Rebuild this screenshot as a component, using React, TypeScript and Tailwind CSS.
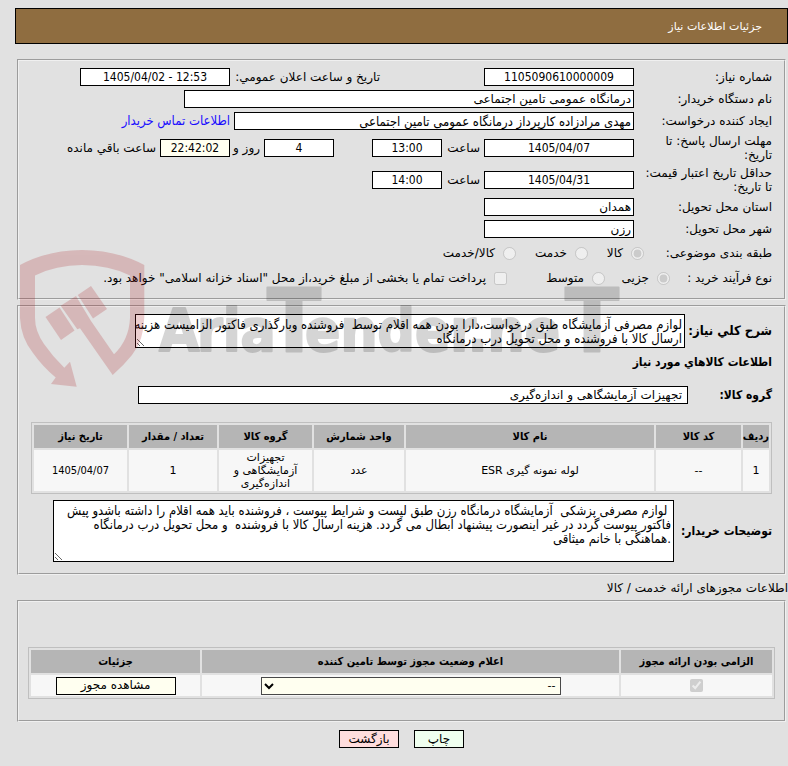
import React from 'react'
import { clsx } from 'clsx'

const items = [
    { row: '1', code: '--', name: 'لوله نمونه گیری ESR', unit: 'عدد', group: 'تجهیزات آزمایشگاهی و اندازه‌گیری', qty: '1', date: '1405/04/07' },
]

const summary = `لوازم مصرفی آزمایشگاه طبق درخواست،دارا بودن همه اقلام توسط  فروشنده وبارگذاری فاکتور الزامیست هزینه
ارسال کالا با فروشنده و محل تحویل درب درمانگاه`

const notes = ` لوازم مصرفی پزشکی  آزمایشگاه درمانگاه رزن طبق لیست و شرایط پیوست ، فروشنده باید همه اقلام را داشته باشدو پیش
فاکتور پیوست گردد در غیر اینصورت پیشنهاد ابطال می گردد. هزینه ارسال کالا با فروشنده  و محل تحویل درب درمانگاه
.هماهنگی با خانم میثاقی`

const panel = 'mx-[2px] border-2 border-[#f0f0f0] [border-style:groove]'
const condensed = 'font-["DejaVu_Sans_Condensed",sans-serif]'
const th = 'h-[23px] bg-[#b5b5b5] p-0 font-["DejaVu_Sans_Condensed",sans-serif] text-[11px] font-bold whitespace-nowrap'
const td = 'bg-[#f7f7f7] p-0 text-center'

function Field({ id, value, className }: { id: string; value: string; className?: string }) {
    return (
        <input
            id={id}
            readOnly
            defaultValue={value}
            className={clsx('h-[18px] min-w-0 border border-black px-[2px]', className)}
        />
    )
}

function NumberField({ id, value, label, className }: { id: string; value: string; label?: string; className?: string }) {
    return (
        <input
            id={id}
            dir="ltr"
            aria-label={label}
            readOnly
            defaultValue={value}
            className={clsx('h-[18px] min-w-0 border border-black text-center', condensed, className)}
        />
    )
}

function Label({ htmlFor, children, className }: { htmlFor: string; children: React.ReactNode; className?: string }) {
    return <label htmlFor={htmlFor} className={clsx('shrink-0', className)}>{children}</label>
}

function Watermark() {
    return (
        <svg className="pointer-events-none absolute top-[248px] left-[18px]" width="610" height="142" viewBox="18 248 610 142" aria-hidden="true">
            <g fill="#aa1419" opacity="0.2">
                <path d="M20 265Q48 250 82 250Q116 250 144.300 265V317Q144 340 132 355Q124 365 112.700 375L80 328.300L77.300 329.300L60.700 305.700L76 296L91 321L114 354.300Q129 340 130 318V275.500Q109 265 82 265Q56 265 35 275.500V318Q35 331 44 344Q53 357 64.300 367.700L70 361.700L76.700 386.700L51 384L55.700 377.500Q43 367 33 353Q21 338 20 318Z" />
                <path d="M45.500 317L59.500 307.500L74.500 330.500L61 340Z" />
                <path d="M77.800 295L91 286L107 309L93 318.500Z" />
            </g>
            <g opacity="0.16" direction="ltr" fontWeight="700" stroke="black" strokeWidth="2" strokeLinejoin="round" className='font-["DejaVu_Sans_Condensed",sans-serif]'>
                <text y="351" fontSize="58">
                    <tspan x="159">A</tspan>
                    <tspan x="197">ria</tspan>
                    <tspan x="267" fontSize="88">T</tspan>
                    <tspan x="305">ender.ne</tspan>
                    <tspan x="565" fontSize="88">T</tspan>
                </text>
            </g>
        </svg>
    )
}

function RequestInfo() {
    return (
        <section className={clsx(panel, 'mt-[15px] h-[241px] px-[12px] pt-[5px] whitespace-nowrap')}>
            <div className="flex h-[22px] items-center gap-1">
                <Label htmlFor="number" className="w-[134px]">شماره نیاز:</Label>
                <NumberField id="number" value="1105090610000009" className="w-[150px] bg-white" />
                <Label htmlFor="announced" className="mr-[100px] w-[146px]">تاریخ و ساعت اعلان عمومي:</Label>
                <NumberField id="announced" value="1405/04/02 - 12:53" className="w-[150px] bg-white" />
            </div>
            <div className="flex h-[22px] items-center gap-1">
                <Label htmlFor="org" className="w-[134px]">نام دستگاه خریدار:</Label>
                <Field id="org" value="درمانگاه عمومی تامین اجتماعی" className="w-[450px] bg-white" />
            </div>
            <div className="flex h-[22px] items-center gap-1">
                <Label htmlFor="creator" className="w-[134px]">ایجاد کننده درخواست:</Label>
                <Field id="creator" value="مهدی مرادزاده کارپرداز درمانگاه عمومی تامین اجتماعی" className={clsx('w-[400px] bg-white text-[13px]', condensed)} />
                <a href="#" className={clsx('text-[13px] text-[#1a0dff]', condensed)}>اطلاعات تماس خریدار</a>
            </div>
            <div className="flex h-[32px] items-center gap-1">
                <Label htmlFor="deadline" className="w-[134px]">مهلت ارسال پاسخ: تا<br />تاریخ:</Label>
                <NumberField id="deadline" value="1405/04/07" className="w-[150px] bg-white" />
                <Label htmlFor="deadline-hour" className="w-[34px]">ساعت</Label>
                <NumberField id="deadline-hour" value="13:00" className="w-[70px] bg-white" />
                <NumberField id="days" value="4" className="mr-[34px] w-[70px] bg-white" />
                <Label htmlFor="days" className="w-[26px]">روز و</Label>
                <NumberField id="remaining" value="22:42:02" className="w-[70px] bg-[#fffff0]" />
                <Label htmlFor="remaining">ساعت باقي مانده</Label>
            </div>
            <div className="flex h-[32px] items-center gap-1">
                <Label htmlFor="valid" className="w-[134px]">حداقل تاریخ اعتبار قیمت:<br />تا تاریخ:</Label>
                <NumberField id="valid" value="1405/04/31" className="w-[150px] bg-white" />
                <Label htmlFor="valid-hour" className="w-[34px]">ساعت</Label>
                <NumberField id="valid-hour" value="14:00" className="w-[70px] bg-white" />
            </div>
            <div className="flex h-[22px] items-center gap-1">
                <Label htmlFor="province" className="w-[134px]">استان محل تحویل:</Label>
                <Field id="province" value="همدان" className="w-[150px] bg-white" />
            </div>
            <div className="flex h-[22px] items-center gap-1">
                <Label htmlFor="city" className="w-[134px]">شهر محل تحویل:</Label>
                <Field id="city" value="رزن" className="w-[150px] bg-white" />
            </div>
            <div className="flex h-[26px] items-center">
                <span className="w-[128px] shrink-0">طبقه بندی موضوعی:</span>
                <label className="flex w-[39px] items-center gap-2"><input type="radio" name="subject" disabled defaultChecked />کالا</label>
                <label className="mr-[17px] flex w-[54px] items-center gap-2"><input type="radio" name="subject" disabled />خدمت</label>
                <label className="mr-[18px] flex items-center gap-2"><input type="radio" name="subject" disabled />کالا/خدمت</label>
            </div>
            <div className="flex h-[24px] items-center">
                <span className="w-[102px] shrink-0">نوع فرآیند خرید :</span>
                <label className="flex w-[51px] items-center gap-2"><input type="radio" name="process" disabled defaultChecked />جزیی</label>
                <label className="mr-[14px] flex w-[57px] items-center gap-2"><input type="radio" name="process" disabled />متوسط</label>
                <label className="mr-[41px] flex items-center gap-2"><input type="checkbox" disabled />پرداخت تمام یا بخشی از مبلغ خرید،از محل "اسناد خزانه اسلامی" خواهد بود.</label>
            </div>
        </section>
    )
}

function GoodsInfo() {
    return (
        <section className={clsx(panel, 'mt-[5px] h-[270px] px-[12px] pt-[7px]')}>
            <div className="flex items-center gap-1">
                <Label htmlFor="summary" className={clsx('w-[83px] text-[13px] font-bold whitespace-nowrap', condensed)}>شرح کلي نیاز:</Label>
                <textarea id="summary" readOnly defaultValue={summary} className={clsx('h-[34px] w-[550px] overflow-hidden border border-black bg-white px-[2px] pt-[3px] text-[13px] leading-[14px] whitespace-pre', condensed)} />
            </div>
            <h2 className={clsx('mt-[6px] h-[16px] leading-[16px] font-bold', condensed)}>اطلاعات کالاهاي مورد نیاز</h2>
            <div className="mt-[16px] flex items-center">
                <Label htmlFor="group" className={clsx('w-[84px] font-bold', condensed)}>گروه کالا:</Label>
                <Field id="group" value="تجهیزات آزمایشگاهی و اندازه‌گیری" className="w-[550px] bg-white px-[5px]" />
            </div>
            <table className="mt-[18px] w-full table-fixed border-separate border-spacing-[2px] border border-[#bfbfbf] text-[11px] leading-[13px]">
                <colgroup>
                    <col className="w-[26px]" />
                    <col className="w-[85px]" />
                    <col />
                    <col className="w-[90px]" />
                    <col className="w-[93px]" />
                    <col className="w-[88px]" />
                    <col className="w-[93px]" />
                </colgroup>
                <thead>
                    <tr>
                        <th className={th}>ردیف</th>
                        <th className={th}>کد کالا</th>
                        <th className={th}>نام کالا</th>
                        <th className={th}>واحد شمارش</th>
                        <th className={th}>گروه کالا</th>
                        <th className={th}>تعداد / مقدار</th>
                        <th className={th}>تاریخ نیاز</th>
                    </tr>
                </thead>
                <tbody>
                    {items.map(item => (
                        <tr key={item.row} className="h-[41px]">
                            <td className={td}>{item.row}</td>
                            <td className={td}>{item.code}</td>
                            <td className={td}>{item.name}</td>
                            <td className={td}>{item.unit}</td>
                            <td className={clsx(td, 'px-2')}>{item.group}</td>
                            <td className={td}>{item.qty}</td>
                            <td className={clsx(td, condensed)}>{item.date}</td>
                        </tr>
                    ))}
                </tbody>
            </table>
            <div className="mt-[6px] flex items-center gap-1">
                <Label htmlFor="notes" className={clsx('w-[94px] font-bold whitespace-nowrap', condensed)}>توضیحات خریدار:</Label>
                <textarea id="notes" readOnly defaultValue={notes} className={clsx('h-[62px] w-[621px] overflow-hidden border border-black bg-white px-[2px] pt-[3px] text-[13px] leading-[14px] whitespace-pre', condensed)} />
            </div>
        </section>
    )
}

function Licenses() {
    return (
        <section className={clsx(panel, 'mt-[3px] h-[122px] px-[9px] pt-[45px]')}>
            <table className="w-full table-fixed border-separate border-spacing-[2px] border border-[#bfbfbf] leading-[13px]">
                <colgroup>
                    <col className="w-[151px]" />
                    <col />
                    <col className="w-[169px]" />
                </colgroup>
                <thead>
                    <tr>
                        <th className={th}>الزامی بودن ارائه مجوز</th>
                        <th className={th}>اعلام وضعیت مجوز توسط تامین کننده</th>
                        <th className={th}>جزئیات</th>
                    </tr>
                </thead>
                <tbody>
                    <tr className="h-[21px]">
                        <td className={td}><input type="checkbox" aria-label="الزامی بودن ارائه مجوز" disabled defaultChecked className="mx-auto block" /></td>
                        <td className={td}>
                            <select aria-label="اعلام وضعیت مجوز توسط تامین کننده" className="mx-auto block h-[18px] w-[300px] border border-[#484848] bg-[#fffff0] text-[11px]">
                                <option>--</option>
                            </select>
                        </td>
                        <td className={td}><button type="button" className="mx-auto block h-[18px] w-[120px] border border-black bg-[#fffff0]">مشاهده مجوز</button></td>
                    </tr>
                </tbody>
            </table>
        </section>
    )
}

export default function App() {
    return (
        <main dir="rtl" className='relative min-h-screen bg-[#e1e1e1] pt-[8px] pb-[18px] pl-[15px] font-["DejaVu_Sans",sans-serif] text-[12px] leading-[14px] text-black'>
            <header className="flex h-[36px] items-center border border-black bg-[#8f6d40] px-[25px] pt-[2px] text-[11px] text-white">
                <h1>جزئیات اطلاعات نیاز</h1>
            </header>
            <RequestInfo />
            <GoodsInfo />
            <h2 className="mt-[6px] h-[16px]">اطلاعات مجوزهای ارائه خدمت / کالا</h2>
            <Licenses />
            <div className="mt-[8px] flex justify-center gap-[15px]">
                <button type="button" className="h-[18px] w-[50px] border border-black bg-[#efffef]">چاپ</button>
                <button type="button" className="h-[18px] w-[60px] border border-black bg-[#ffdddd]">بازگشت</button>
            </div>
            <Watermark />
        </main>
    )
}
